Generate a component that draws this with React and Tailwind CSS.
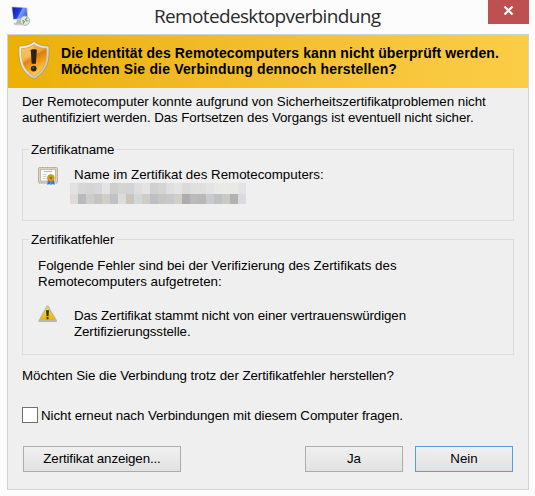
import { useState } from 'react'

const mosaicTop = ['#e1e1e2', '#d6d6d6', '#d4d4d5', '#d7d7d9', '#e3e3e3', '#cecece', '#d4d4d3', '#d2d3d5', '#dddddd', '#e3e3e4', '#d0d0cf', '#d4d4d3', '#dfdfdf', '#e3e3e4', '#dadadb', '#dededd', '#dfdfe0', '#e3e3e3', '#e8e8e6', '#e9e9e8', '#e8e9e4', '#e3e3e5']
const mosaicBottom = ['#dfdad7', '#b9babc', '#cdcdcd', '#c5c4c1', '#d2cdc7', '#bfc1c7', '#dddbdc', '#cbc5c0', '#d3d7da', '#d0cdc7', '#bdbfc5', '#c7c6c0', '#c6c8ce', '#d2cfc9', '#b0abac', '#bababa', '#b8b8b8', '#cac9d0', '#bfc0c2', '#c8c8c4', '#b2b2b0', '#dadae0']

function RemoteIcon() {
  return (
    <svg width="20" height="20" viewBox="0 0 20 20">
      <defs>
        <linearGradient id="screen" x1="0" y1="0.2" x2="1" y2="0.6">
          <stop offset="0" stopColor="#1a1fae" />
          <stop offset="0.5" stopColor="#2340dc" />
          <stop offset="0.58" stopColor="#7f9df4" />
          <stop offset="1" stopColor="#3a62e6" />
        </linearGradient>
      </defs>
      <ellipse cx="7.5" cy="17.8" rx="5" ry="1.5" fill="#c4c7cb" />
      <path d="M6 13.5h4.5l.5 4H5z" fill="#b4b8bf" />
      <path d="M.4.6L16.4 1.4 17.2 13.2 2 13.8z" fill="#c3cbe0" />
      <path d="M1.2 1.3L15.6 2 16.3 12.3 2.6 12.9z" fill="url(#screen)" />
      <circle cx="13.9" cy="14.7" r="4.7" fill="#e2e6e2" stroke="#a4a9a6" strokeWidth="0.8" />
      <path d="M11.4 14.1l2 1.6-1.5 1.9M16.5 15.2l-2-1.5 1.6-2" fill="none" stroke="#5aa560" strokeWidth="1.2" />
    </svg>
  )
}

function ShieldIcon() {
  return (
    <svg width="32" height="39" viewBox="0 0 32 39">
      <defs>
        <linearGradient id="shieldRim" x1="0" y1="0" x2="1" y2="1">
          <stop offset="0" stopColor="#f6f4ee" />
          <stop offset="0.5" stopColor="#e2dfd8" />
          <stop offset="1" stopColor="#bdb5a5" />
        </linearGradient>
        <linearGradient id="shieldFill" x1="0" y1="0" x2="0.4" y2="1">
          <stop offset="0" stopColor="#f8ba4c" />
          <stop offset="0.42" stopColor="#f2a530" />
          <stop offset="0.5" stopColor="#df7d08" />
          <stop offset="0.7" stopColor="#f09a18" />
          <stop offset="1" stopColor="#ffcc48" />
        </linearGradient>
      </defs>
      <path d="M16 .5C12.5 3.5 7 5.2 1.1 5.1.3 18 1.5 30.5 16 38 30.5 30.5 31.7 18 30.9 5.1 25 5.2 19.5 3.5 16 .5z" fill="url(#shieldRim)" stroke="#a08c5c" strokeWidth="0.6" />
      <path d="M16 3.4C12.5 6.1 8.300 7.4 3.600 7.6 3.1 18.500 4.500 28.600 16 35.2 27.500 28.600 28.900 18.500 28.400 7.6 23.700 7.4 19.500 6.1 16 3.400z" fill="url(#shieldFill)" stroke="#c08a34" strokeWidth="0.5" />
      <path d="M3.900 7.900C9 7.600 13 6.400 16 4v13C12 18 8 20 4.600 22.500 3.700 17 3.700 13 3.900 7.900z" fill="#ffe3a4" opacity="0.3" />
      <path d="M12.800 9.200c0-1.200 6-1.200 6 0l-.9 13.500h-4.200z" fill="#29211a" />
      <circle cx="15.700" cy="27.600" r="2.900" fill="#29211a" />
      <circle cx="15.100" cy="26.800" r="1" fill="#6e5536" />
    </svg>
  )
}

function CertificateIcon() {
  return (
    <svg width="20" height="19" viewBox="0 0 20 19">
      <rect x="0.5" y="0.5" width="19" height="15.5" rx="1" fill="#dcd3c2" stroke="#c9bfac" />
      <rect x="0.5" y="0.5" width="19" height="15.5" rx="1" fill="none" stroke="#ada28c" strokeDasharray="1 1.5" />
      <rect x="2.5" y="2.5" width="15" height="11.5" fill="#fdfdfd" stroke="#b9ae9b" strokeWidth="0.8" />
      <path d="M6 4.5h8" stroke="#aab6d8" />
      <path d="M4.5 7.5h4M4.5 9.5h4M4.5 11.5h5" stroke="#ccd4da" />
      <path d="M9.8 13h2.900v5l-1.500-.9-1.900 1zM13.200 13H16l.5 5-1.900-1-1.400.9z" fill="#2f72ee" />
      <circle cx="12.900" cy="11" r="3.400" fill="#dca014" stroke="#b88210" strokeWidth="0.6" />
      <circle cx="12.900" cy="11" r="1.400" fill="#9c700e" />
    </svg>
  )
}

function WarningIcon() {
  return (
    <svg width="20" height="18" viewBox="0 0 20 18">
      <defs>
        <linearGradient id="warnFill" x1="0" y1="0" x2="0" y2="1">
          <stop offset="0" stopColor="#f3e520" />
          <stop offset="1" stopColor="#edb206" />
        </linearGradient>
      </defs>
      <path d="M8.6.8q.9-1.200 1.800 0L19 15.500q.5 1.300-.9 1.500H1.300Q0 16.800.5 15.500z" fill="#b6b6b2" />
      <path d="M9.500 1.800L17.600 15.100H1.900z" fill="url(#warnFill)" />
      <path d="M8.100 5.200h2.900l-.5 6H8.600z" fill="#2e2a10" />
      <rect x="8.600" y="12.200" width="1.900" height="2" fill="#2e2a10" />
    </svg>
  )
}

function GroupBox({ title, className, children }) {
  return (
    <fieldset className={`relative border border-[#dcdcdc] ${className}`}>
      <legend className="absolute -top-[8px] left-[6px] h-4 bg-[#efefef] px-[2px] leading-4 tracking-[-0.07px]">{title}</legend>
      {children}
    </fieldset>
  )
}

function DialogButton({ className, children }) {
  return (
    <button className={`h-[26px] border bg-linear-to-b from-[#f0f0f0] to-[#e2e2e2] leading-4 ${className}`}>
      {children}
    </button>
  )
}

export default function App() {
  const [dontAsk, setDontAsk] = useState(false)

  return (
    <div className="flex h-[496px] w-[535px] flex-col overflow-hidden bg-[#fcfcfc] font-['Liberation_Sans',Arial,sans-serif] text-[13.33px] leading-4 whitespace-nowrap text-black">
      {/* Title bar */}
      <header className="flex h-[34px] items-start pr-[6px] pl-[11px]">
        <div className="mt-[6px] w-5"><RemoteIcon /></div>
        <h1 className="ml-[123px] w-[334px] font-['Open_Sans',sans-serif] text-[19px] leading-[33px] tracking-[-0.65px] text-[#2b2b2b]">
          Remotedesktopverbindung
        </h1>
        <button aria-label="Schließen" className="flex h-6 w-[41px] items-center justify-center bg-[#bd5151]">
          <svg width="11" height="9" viewBox="0 0 11 9" className="-mt-[3px]">
            <path d="M1.5 0.5l8 8M9.5 0.5l-8 8" stroke="#fff" strokeWidth="2.2" />
          </svg>
        </button>
      </header>

      <main className="mr-[6px] ml-[7px] h-[456px] border border-[#d0d2d5] bg-[#efefef]">
        {/* Warning banner */}
        <div className="flex h-[53px] bg-linear-to-r from-[#ebb000] to-[#fbcd46] pt-[6px] pl-[10px]">
          <ShieldIcon />
          <p className="mt-[4px] ml-[11px] text-[14px] leading-4 font-bold">
            <span className="tracking-[0.1px]">Die Identität des Remotecomputers kann nicht überprüft werden.</span><br />
            <span className="tracking-[0.17px]">Möchten Sie die Verbindung dennoch herstellen?</span>
          </p>
        </div>

        <div className="flex flex-col pr-[14px] pl-[14px]">
          <p className="mt-[6px] h-8">
            <span className="tracking-[-0.04px]">Der Remotecomputer konnte aufgrund von Sicherheitszertifikatproblemen nicht</span><br />
            <span className="tracking-[-0.08px]">authentifiziert werden. Das Fortsetzen des Vorgangs ist eventuell nicht sicher.</span>
          </p>

          <GroupBox title="Zertifikatname" className="mt-[23px] h-[72px]">
            <div className="flex pt-[17px] pl-[15px]">
              <CertificateIcon />
              <div className="ml-[12px]">
                <p className="pl-1">Name im Zertifikat des Remotecomputers:</p>
                <div className="flex h-[11px]">
                  {mosaicTop.map((c, i) => <i key={i} className="w-2" style={{ background: c }} />)}
                </div>
                <div className="flex h-[10px]">
                  {mosaicBottom.map((c, i) => <i key={i} className="w-2" style={{ background: c }} />)}
                </div>
              </div>
            </div>
          </GroupBox>

          <GroupBox title="Zertifikatfehler" className="mt-[18px] h-[116px]">
            <p className="pt-[18px] pl-[15px]">
              Folgende Fehler sind bei der Verifizierung des Zertifikats des<br />
              Remotecomputers aufgetreten:
            </p>
            <div className="mt-[15px] flex pl-[15px]">
              <WarningIcon />
              <p className="mt-[3px] ml-4 tracking-[-0.09px]">
                Das Zertifikat stammt nicht von einer vertrauenswürdigen<br />
                Zertifizierungsstelle.
              </p>
            </div>
          </GroupBox>

          <p className="mt-[13px] tracking-[-0.07px]">Möchten Sie die Verbindung trotz der Zertifikatfehler herstellen?</p>

          <label className="mt-[23px] flex h-4 items-center">
            <input
              type="checkbox"
              checked={dontAsk}
              onChange={(e) => setDontAsk(e.target.checked)}
              className="size-4 appearance-none border border-[#707070] bg-white checked:bg-[#3399ff]"
            />
            <span className="mt-px ml-[3px] tracking-[-0.07px]">Nicht erneut nach Verbindungen mit diesem Computer fragen.</span>
          </label>

          <div className="mt-[23px] flex pl-px">
            <DialogButton className="w-[158px] border-[#acacac] tracking-[-0.12px]">Zertifikat anzeigen...</DialogButton>
            <DialogButton className="ml-[124px] w-[98px] border-[#acacac]">Ja</DialogButton>
            <DialogButton className="ml-[12px] w-[98px] border-[#569de5]">Nein</DialogButton>
          </div>
        </div>
      </main>
    </div>
  )
}
